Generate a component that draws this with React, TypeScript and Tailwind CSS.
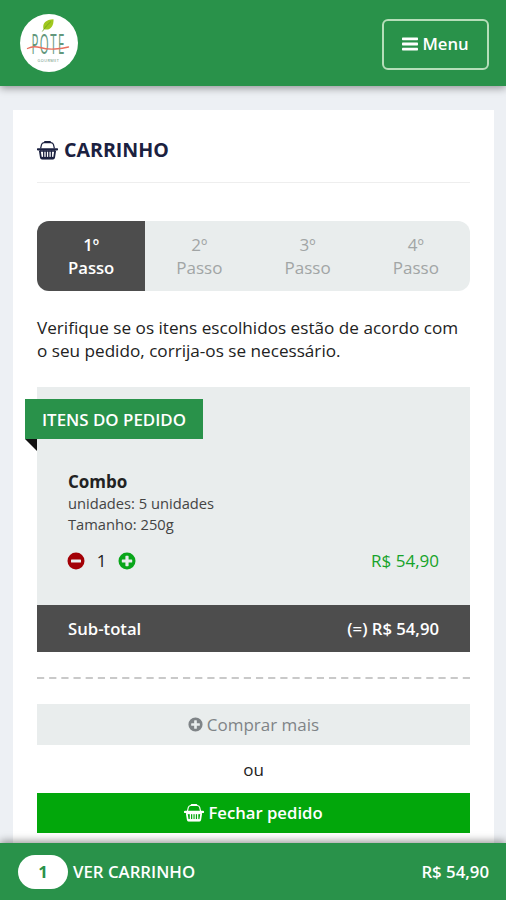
import type { ReactNode } from "react";

type IconProps = { className?: string };

function BasketIcon({ className }: IconProps) {
  return (
    <svg viewBox="0 0 21 19" className={className} fill="none" stroke="currentColor">
      <path d="M3.600 7.500 4.500 3.600Q5 1.700 7 1.600h7q2 .1 2.500 2L17.400 7.500" strokeWidth="1.200" />
      <path d="M8 1.100h5" strokeWidth="2" strokeLinecap="round" />
      <path d="M1 8.300h19" strokeWidth="2.300" strokeLinecap="round" />
      <path d="M2.800 9.500 3.900 16.600q.2 1 1.200 1h10.800q1 0 1.200-1l1.100-7.100" strokeWidth="1.800" />
      <path d="M4.200 17h12.600" strokeWidth="2.200" />
      <path d="M3 10h15" strokeWidth="1.500" />
      <path d="M6.700 9.500v7M9.300 9.500v7M11.800 9.500v7M14.400 9.500v7" strokeWidth="1.300" />
    </svg>
  );
}

function PlusCircle({ className }: IconProps) {
  return (
    <svg viewBox="0 0 18 18" className={className}>
      <path
        fillRule="evenodd"
        fill="currentColor"
        d="M9 .5a8.500 8.500 0 1 1 0 17a8.500 8.500 0 0 1 0-17ZM8 3.800q-.6 0-.6.6v3h-3q-.6 0-.6.6v2q0 .6.6.6h3v3q0 .6.6.6h2q.6 0 .6-.6v-3h3q.6 0 .6-.6v-2q0-.6-.6-.6h-3v-3q0-.6-.6-.6Z"
      />
    </svg>
  );
}

function MinusCircle({ className }: IconProps) {
  return (
    <svg viewBox="0 0 18 18" className={className}>
      <circle cx="9" cy="9" r="8.5" fill="currentColor" />
      <rect x="4" y="7.5" width="10" height="3" rx=".6" fill="#e9eded" />
    </svg>
  );
}

function BarsIcon({ className }: IconProps) {
  return (
    <svg viewBox="0 0 16 14" className={className} fill="currentColor">
      <rect y="0.5" width="16" height="2.8" rx=".7" />
      <rect y="5.6" width="16" height="2.8" rx=".7" />
      <rect y="10.7" width="16" height="2.8" rx=".7" />
    </svg>
  );
}

function Logo() {
  return (
    <svg viewBox="0 0 58 58" className="h-[58px] w-[58px]">
      <circle cx="29" cy="29" r="29" fill="#fff" />
      <path d="M23.500 15C22 9 26 5.500 33.500 5.200C34 12 30 17.500 23.500 15Z" fill="#a0c81e" />
      <path d="M22.300 17.500Q26 11.500 31 7.500" fill="none" stroke="#6fa21c" strokeWidth=".8" />
      <text
        transform="translate(11.500 40) scale(1 2.300)"
        fontFamily="Open Sans, sans-serif"
        fontSize="11.500"
        letterSpacing="1.400"
        fill="#62977c"
      >
        POTE
      </text>
      <path d="M7.500 34.500Q13 31.500 20 33.500T35 35T48.500 33" fill="none" stroke="#e8705f" strokeWidth="1.400" strokeLinecap="round" />
      <text x="17.500" y="47.500" fontFamily="Open Sans, sans-serif" fontSize="3.800" letterSpacing=".5" fill="#5f8d77">
        GOURMET
      </text>
    </svg>
  );
}

function Step({ number, active }: { number: string; active?: boolean }) {
  return (
    <div
      className={`flex flex-1 flex-col items-center justify-center leading-[23px] ${
        active ? "bg-[#4d4d4d] text-[16.700px] font-semibold text-white" : "text-[17px] text-[#a1a5a5]"
      }`}
    >
      <span>{number}</span>
      <span>Passo</span>
    </div>
  );
}

function Button({ className, children }: { className: string; children: ReactNode }) {
  return <button className={`flex w-full items-center justify-center gap-1 ${className}`}>{children}</button>;
}

export default function App() {
  const steps = ["1º", "2º", "3º", "4º"];

  return (
    <div className="flex h-[900px] w-[506px] flex-col overflow-hidden bg-[#edf0f4] font-['Open_Sans',sans-serif] text-[#222]">
      <header className="z-10 flex h-[86px] shrink-0 items-center justify-between bg-[#29924a] pr-[17px] pl-5 shadow-[0_2px_8px_rgba(0,0,0,0.4)]">
        <Logo />
        <button className="mt-0.5 flex h-[51px] w-[107px] items-center justify-center gap-1 rounded-md border-2 border-[#b5deb9] text-[16.700px] font-semibold text-white">
          <BarsIcon className="h-[14px] w-4" />
          Menu
        </button>
      </header>

      <main className="mt-6 mr-3 ml-[13px] flex min-h-0 flex-1 flex-col overflow-hidden bg-white px-6">
        <h1 className="flex h-[73px] shrink-0 items-center gap-1.5 border-b border-[#eee] pt-2 text-[19.600px] font-bold text-[#1b2140]">
          <BasketIcon className="h-[19px] w-[21px]" />
          CARRINHO
        </h1>

        <div className="mt-[38px] flex h-[70px] shrink-0 overflow-hidden rounded-xl bg-[#e9eded]">
          {steps.map((step, i) => (
            <Step key={step} number={step} active={i === 0} />
          ))}
        </div>

        <p className="mt-[25px] text-[17.150px] leading-[23px] whitespace-nowrap">
          Verifique se os itens escolhidos estão de acordo com
          <br />o seu pedido, corrija-os se necessário.
        </p>

        <section className="mt-[25px] h-[265px] shrink-0 bg-[#e9eded] pt-3">
          <div className="relative -ml-3 flex h-10 w-[178px] items-center justify-center bg-[#29924a] pt-0.5 text-[16.900px] font-semibold text-white">
            ITENS DO PEDIDO
            <svg viewBox="0 0 12 12" className="absolute top-full left-0 h-3 w-3">
              <path d="M0 0h12v12Z" fill="#111" />
            </svg>
          </div>
          <div className="h-[166px] px-[31px] pt-[31px]">
            <h2 className="text-[17px] leading-[23px] font-bold">Combo</h2>
            <p className="text-[14.700px] leading-[21px] text-[#444]">unidades: 5 unidades</p>
            <p className="text-[14.700px] leading-[21px] text-[#444]">Tamanho: 250g</p>
            <div className="mt-[13px] -ml-px flex items-center">
              <MinusCircle className="h-[18px] w-[18px] text-[#a30006]" />
              <span className="w-[33px] text-center text-[17px]">1</span>
              <PlusCircle className="h-[18px] w-[18px] text-[#09a61a]" />
              <span className="ml-auto text-[17px] text-[#16a32a]">R$ 54,90</span>
            </div>
          </div>
          <div className="flex h-[47px] items-center justify-between bg-[#4d4d4d] px-[31px] text-[16.700px] font-semibold text-white">
            <span>Sub-total</span>
            <span>(=) R$ 54,90</span>
          </div>
        </section>

        <svg className="mt-[25px] h-0.5 w-full shrink-0">
          <path d="M0 1H433" stroke="#c9c9c9" strokeWidth="2" strokeDasharray="7.200 4.965" />
        </svg>

        <Button className="mt-[25px] h-[41px] shrink-0 bg-[#e9eded] text-[17px] text-[#7f8487]">
          <PlusCircle className="h-[15px] w-[15px]" />
          Comprar mais
        </Button>
        <p className="h-12 shrink-0 text-center text-[17px] leading-[49px]">ou</p>
        <Button className="h-10 shrink-0 bg-[#02a70b] text-[16.700px] font-semibold text-white">
          <BasketIcon className="h-[18px] w-5" />
          Fechar pedido
        </Button>
      </main>

      <footer className="z-10 flex h-[57px] shrink-0 items-center bg-[#29924a] pr-[17px] pl-[18px] text-[16.800px] font-semibold text-white shadow-[0_-2px_8px_rgba(0,0,0,0.4)]">
        <span className="mr-[5px] flex h-[34px] w-[50px] items-center justify-center rounded-full bg-white font-bold text-[#29924a]">1</span>
        VER CARRINHO
        <span className="ml-auto">R$ 54,90</span>
      </footer>
    </div>
  );
}
